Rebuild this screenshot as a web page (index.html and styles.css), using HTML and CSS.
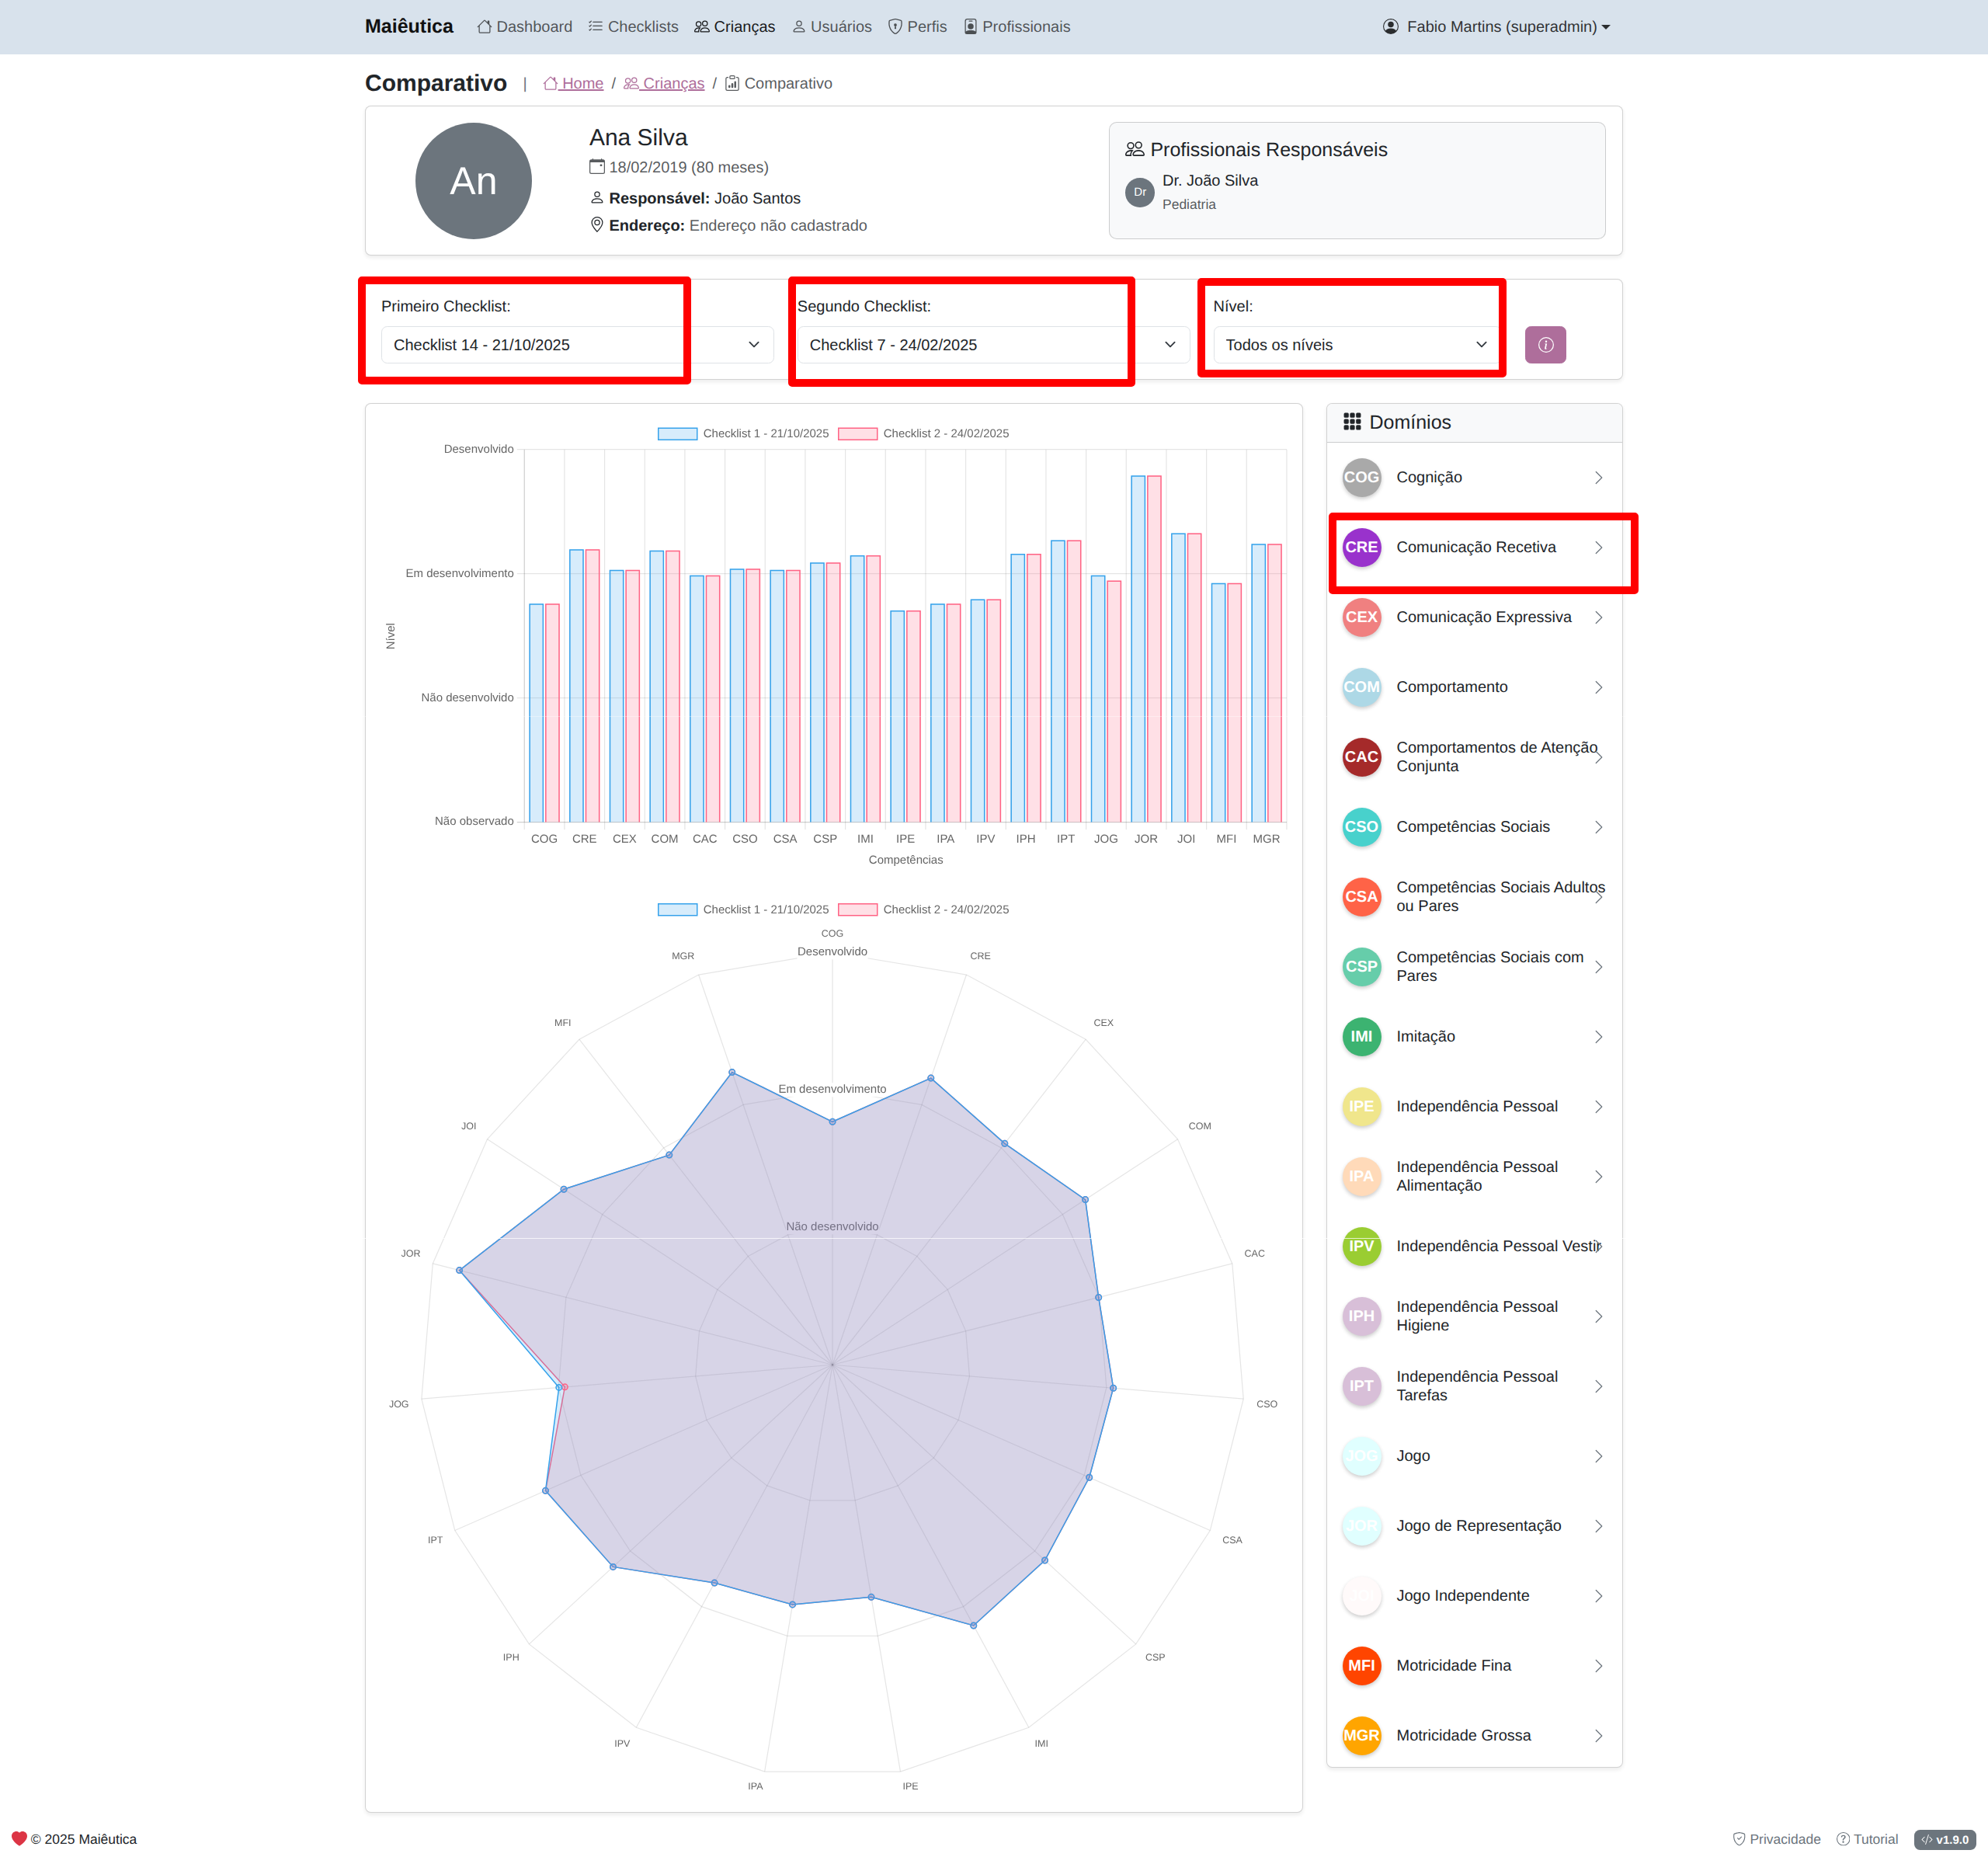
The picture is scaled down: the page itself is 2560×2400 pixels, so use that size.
FILE: index.html
```html
<!DOCTYPE html>
<html lang="pt-BR">
<head>
<meta charset="utf-8">
<title>Comparativo - Maiêutica</title>
<link rel="stylesheet" href="styles.css">
</head>
<body>
<svg class="sprite" xmlns="http://www.w3.org/2000/svg">
  <symbol id="i-house" viewBox="0 0 16 16"><path d="M8.707 1.5a1 1 0 0 0-1.414 0L.646 8.146a.5.5 0 0 0 .708.708L2 8.207V13.5A1.5 1.5 0 0 0 3.5 15h9a1.5 1.5 0 0 0 1.5-1.5V8.207l.646.647a.5.5 0 0 0 .708-.708L13 5.793V2.5a.5.5 0 0 0-.5-.5h-1a.5.5 0 0 0-.5.5v1.293zM13 7.207V13.5a.5.5 0 0 1-.5.5h-9a.5.5 0 0 1-.5-.5V7.207l5-5z"/></symbol>
  <symbol id="i-list" viewBox="0 0 16 16"><path fill-rule="evenodd" d="M5 11.5a.5.5 0 0 1 .5-.5h9a.5.5 0 0 1 0 1h-9a.5.5 0 0 1-.5-.5m0-4a.5.5 0 0 1 .5-.5h9a.5.5 0 0 1 0 1h-9a.5.5 0 0 1-.5-.5m0-4a.5.5 0 0 1 .5-.5h9a.5.5 0 0 1 0 1h-9a.5.5 0 0 1-.5-.5M3.854 2.146a.5.5 0 0 1 0 .708l-1.5 1.5a.5.5 0 0 1-.708 0l-.5-.5a.5.5 0 1 1 .708-.708L2 3.293l1.146-1.147a.5.5 0 0 1 .708 0m0 4a.5.5 0 0 1 0 .708l-1.5 1.5a.5.5 0 0 1-.708 0l-.5-.5a.5.5 0 1 1 .708-.708L2 7.293l1.146-1.147a.5.5 0 0 1 .708 0m0 4a.5.5 0 0 1 0 .708l-1.5 1.5a.5.5 0 0 1-.708 0l-.5-.5a.5.5 0 0 1 .708-.708l.146.147 1.146-1.147a.5.5 0 0 1 .708 0"/></symbol>
  <symbol id="i-people" viewBox="0 0 16 16"><path d="M15 14s1 0 1-1-1-4-5-4-5 3-5 4 1 1 1 1zm-7.978-1L7 12.996c.001-.264.167-1.03.76-1.72C8.312 10.629 9.282 10 11 10c1.717 0 2.687.63 3.24 1.276.593.69.758 1.457.76 1.72l-.008.002-.014.002zM11 7a2 2 0 1 0 0-4 2 2 0 0 0 0 4m3-2a3 3 0 1 1-6 0 3 3 0 0 1 6 0M6.936 9.28a6 6 0 0 0-1.23-.247A7 7 0 0 0 5 9c-4 0-5 3-5 4q0 1 1 1h4.216A2.24 2.24 0 0 1 5 13c0-1.01.377-2.042 1.09-2.904.243-.294.526-.569.846-.816M4.92 10A5.5 5.5 0 0 0 4 13H1c0-.26.164-1.03.76-1.724.545-.636 1.492-1.256 3.16-1.275ZM1.5 5.5a3 3 0 1 1 6 0 3 3 0 0 1-6 0m3-2a2 2 0 1 0 0 4 2 2 0 0 0 0-4"/></symbol>
  <symbol id="i-person" viewBox="0 0 16 16"><path d="M8 8a3 3 0 1 0 0-6 3 3 0 0 0 0 6m2-3a2 2 0 1 1-4 0 2 2 0 0 1 4 0m4 8c0 1-1 1-1 1H3s-1 0-1-1 1-4 6-4 6 3 6 4m-1-.004c-.001-.246-.154-.986-.832-1.664C11.516 10.68 10.289 10 8 10s-3.516.68-4.168 1.332c-.678.678-.83 1.418-.832 1.664z"/></symbol>
  <symbol id="i-shield-lock" viewBox="0 0 16 16"><path d="M5.338 1.59a61 61 0 0 0-2.837.856.48.48 0 0 0-.328.39c-.554 4.157.726 7.19 2.253 9.188a10.7 10.7 0 0 0 2.287 2.233c.346.244.652.42.893.533q.18.085.293.118a1 1 0 0 0 .101.025 1 1 0 0 0 .1-.025q.114-.034.294-.118c.24-.113.547-.29.893-.533a10.7 10.7 0 0 0 2.287-2.233c1.527-1.997 2.807-5.031 2.253-9.188a.48.48 0 0 0-.328-.39c-.651-.213-1.75-.56-2.837-.855C9.552 1.29 8.531 1.067 8 1.067c-.53 0-1.552.223-2.662.524zM5.072.56C6.157.265 7.31 0 8 0s1.843.265 2.928.56c1.11.3 2.229.655 2.887.87a1.54 1.54 0 0 1 1.044 1.262c.596 4.477-.787 7.795-2.465 9.99a11.8 11.8 0 0 1-2.517 2.453 7 7 0 0 1-1.048.625c-.28.132-.581.24-.829.24s-.548-.108-.829-.24a7 7 0 0 1-1.048-.625 11.8 11.8 0 0 1-2.517-2.453C1.928 10.487.545 7.169 1.141 2.692A1.54 1.54 0 0 1 2.185 1.43 63 63 0 0 1 5.072.56"/><path d="M9.5 6.5a1.5 1.5 0 0 1-1 1.415l.385 1.99a.5.5 0 0 1-.491.595h-.788a.5.5 0 0 1-.49-.595l.384-1.99a1.5 1.5 0 1 1 2-1.415"/></symbol>
  <symbol id="i-shield-check" viewBox="0 0 16 16"><path d="M5.338 1.59a61 61 0 0 0-2.837.856.48.48 0 0 0-.328.39c-.554 4.157.726 7.19 2.253 9.188a10.7 10.7 0 0 0 2.287 2.233c.346.244.652.42.893.533q.18.085.293.118a1 1 0 0 0 .101.025 1 1 0 0 0 .1-.025q.114-.034.294-.118c.24-.113.547-.29.893-.533a10.7 10.7 0 0 0 2.287-2.233c1.527-1.997 2.807-5.031 2.253-9.188a.48.48 0 0 0-.328-.39c-.651-.213-1.75-.56-2.837-.855C9.552 1.29 8.531 1.067 8 1.067c-.53 0-1.552.223-2.662.524zM5.072.56C6.157.265 7.31 0 8 0s1.843.265 2.928.56c1.11.3 2.229.655 2.887.87a1.54 1.54 0 0 1 1.044 1.262c.596 4.477-.787 7.795-2.465 9.99a11.8 11.8 0 0 1-2.517 2.453 7 7 0 0 1-1.048.625c-.28.132-.581.24-.829.24s-.548-.108-.829-.24a7 7 0 0 1-1.048-.625 11.8 11.8 0 0 1-2.517-2.453C1.928 10.487.545 7.169 1.141 2.692A1.54 1.54 0 0 1 2.185 1.43 63 63 0 0 1 5.072.56"/><path d="M10.854 5.146a.5.5 0 0 1 0 .708l-3 3a.5.5 0 0 1-.708 0l-1.5-1.5a.5.5 0 1 1 .708-.708L7.5 7.793l2.646-2.647a.5.5 0 0 1 .708 0"/></symbol>
  <symbol id="i-badge" viewBox="0 0 16 16"><path d="M6.5 2a.5.5 0 0 0 0 1h3a.5.5 0 0 0 0-1zM11 8a3 3 0 1 1-6 0 3 3 0 0 1 6 0"/><path d="M4.5 0A2.5 2.5 0 0 0 2 2.5V14a2 2 0 0 0 2 2h8a2 2 0 0 0 2-2V2.5A2.5 2.5 0 0 0 11.5 0zM3 2.5A1.5 1.5 0 0 1 4.5 1h7A1.5 1.5 0 0 1 13 2.5v10.795a4.2 4.2 0 0 0-.776-.492C11.392 12.387 10.063 12 8 12s-3.392.387-4.224.803a4.2 4.2 0 0 0-.776.492z"/></symbol>
  <symbol id="i-person-circle" viewBox="0 0 16 16"><path d="M11 6a3 3 0 1 1-6 0 3 3 0 0 1 6 0"/><path fill-rule="evenodd" d="M0 8a8 8 0 1 1 16 0A8 8 0 0 1 0 8m8-7a7 7 0 0 0-5.468 11.37C3.242 11.226 4.805 10 8 10s4.757 1.225 5.468 2.37A7 7 0 0 0 8 1"/></symbol>
  <symbol id="i-clipboard" viewBox="0 0 16 16"><path d="M4 11a1 1 0 1 1 2 0v1a1 1 0 1 1-2 0zm6-4a1 1 0 1 1 2 0v5a1 1 0 1 1-2 0zM7 9a1 1 0 0 1 2 0v3a1 1 0 1 1-2 0z"/><path d="M4 1.5H3a2 2 0 0 0-2 2V14a2 2 0 0 0 2 2h10a2 2 0 0 0 2-2V3.5a2 2 0 0 0-2-2h-1v1h1a1 1 0 0 1 1 1V14a1 1 0 0 1-1 1H3a1 1 0 0 1-1-1V3.5a1 1 0 0 1 1-1h1z"/><path d="M9.5 1a.5.5 0 0 1 .5.5v1a.5.5 0 0 1-.5.5h-3a.5.5 0 0 1-.5-.5v-1a.5.5 0 0 1 .5-.5zm-3-1A1.5 1.5 0 0 0 5 1.5v1A1.5 1.5 0 0 0 6.5 4h3A1.5 1.5 0 0 0 11 2.5v-1A1.5 1.5 0 0 0 9.5 0z"/></symbol>
  <symbol id="i-calendar" viewBox="0 0 16 16"><path d="M11 6.5a.5.5 0 0 1 .5-.5h1a.5.5 0 0 1 .5.5v1a.5.5 0 0 1-.5.5h-1a.5.5 0 0 1-.5-.5z"/><path d="M3.5 0a.5.5 0 0 1 .5.5V1h8V.5a.5.5 0 0 1 1 0V1h1a2 2 0 0 1 2 2v11a2 2 0 0 1-2 2H2a2 2 0 0 1-2-2V3a2 2 0 0 1 2-2h1V.5a.5.5 0 0 1 .5-.5M1 4v10a1 1 0 0 0 1 1h12a1 1 0 0 0 1-1V4z"/></symbol>
  <symbol id="i-geo" viewBox="0 0 16 16"><path d="M12.166 8.94c-.524 1.062-1.234 2.12-1.96 3.07A32 32 0 0 1 8 14.58a32 32 0 0 1-2.206-2.57c-.726-.95-1.436-2.008-1.96-3.07C3.304 7.867 3 6.862 3 6a5 5 0 0 1 10 0c0 .862-.305 1.867-.834 2.94M8 16s6-5.686 6-10A6 6 0 0 0 2 6c0 4.314 6 10 6 10"/><path d="M8 8a2 2 0 1 1 0-4 2 2 0 0 1 0 4m0 1a3 3 0 1 0 0-6 3 3 0 0 0 0 6"/></symbol>
  <symbol id="i-info" viewBox="0 0 16 16"><path d="M8 15A7 7 0 1 1 8 1a7 7 0 0 1 0 14m0 1A8 8 0 1 0 8 0a8 8 0 0 0 0 16"/><path d="m8.93 6.588-2.29.287-.082.38.45.083c.294.07.352.176.288.469l-.738 3.468c-.194.897.105 1.319.808 1.319.545 0 1.178-.252 1.465-.598l.088-.416c-.2.176-.492.246-.686.246-.275 0-.375-.193-.304-.533zM9 4.5a1 1 0 1 1-2 0 1 1 0 0 1 2 0"/></symbol>
  <symbol id="i-grid" viewBox="0 0 16 16"><path d="M1 2a1 1 0 0 1 1-1h2a1 1 0 0 1 1 1v2a1 1 0 0 1-1 1H2a1 1 0 0 1-1-1zm5 0a1 1 0 0 1 1-1h2a1 1 0 0 1 1 1v2a1 1 0 0 1-1 1H7a1 1 0 0 1-1-1zm5 0a1 1 0 0 1 1-1h2a1 1 0 0 1 1 1v2a1 1 0 0 1-1 1h-2a1 1 0 0 1-1-1zM1 7a1 1 0 0 1 1-1h2a1 1 0 0 1 1 1v2a1 1 0 0 1-1 1H2a1 1 0 0 1-1-1zm5 0a1 1 0 0 1 1-1h2a1 1 0 0 1 1 1v2a1 1 0 0 1-1 1H7a1 1 0 0 1-1-1zm5 0a1 1 0 0 1 1-1h2a1 1 0 0 1 1 1v2a1 1 0 0 1-1 1h-2a1 1 0 0 1-1-1zM1 12a1 1 0 0 1 1-1h2a1 1 0 0 1 1 1v2a1 1 0 0 1-1 1H2a1 1 0 0 1-1-1zm5 0a1 1 0 0 1 1-1h2a1 1 0 0 1 1 1v2a1 1 0 0 1-1 1H7a1 1 0 0 1-1-1zm5 0a1 1 0 0 1 1-1h2a1 1 0 0 1 1 1v2a1 1 0 0 1-1 1h-2a1 1 0 0 1-1-1z"/></symbol>
  <symbol id="i-chevron" viewBox="0 0 16 16"><path fill-rule="evenodd" d="M4.646 1.646a.5.5 0 0 1 .708 0l6 6a.5.5 0 0 1 0 .708l-6 6a.5.5 0 0 1-.708-.708L10.293 8 4.646 2.354a.5.5 0 0 1 0-.708"/></symbol>
  <symbol id="i-heart" viewBox="0 0 16 16"><path fill-rule="evenodd" d="M8 1.314C12.438-3.248 23.534 4.735 8 15-7.534 4.736 3.562-3.248 8 1.314"/></symbol>
  <symbol id="i-question" viewBox="0 0 16 16"><path d="M8 15A7 7 0 1 1 8 1a7 7 0 0 1 0 14m0 1A8 8 0 1 0 8 0a8 8 0 0 0 0 16"/><path d="M5.255 5.786a.237.237 0 0 0 .241.247h.825c.138 0 .248-.113.266-.25.09-.656.54-1.134 1.342-1.134.686 0 1.314.343 1.314 1.168 0 .635-.374.927-.965 1.371-.673.489-1.206 1.06-1.168 1.987l.003.217a.25.25 0 0 0 .25.246h.811a.25.25 0 0 0 .25-.25v-.105c0-.718.273-.927 1.01-1.486.609-.463 1.244-.977 1.244-2.056 0-1.511-1.276-2.241-2.673-2.241-1.267 0-2.655.59-2.75 2.286m1.557 5.763c0 .533.425.927 1.01.927.609 0 1.028-.394 1.028-.927 0-.552-.42-.94-1.029-.94-.584 0-1.009.388-1.009.94"/></symbol>
  <symbol id="i-code" viewBox="0 0 16 16"><path d="M10.478 1.647a.5.5 0 1 0-.956-.294l-4 13a.5.5 0 0 0 .956.294zM4.854 4.146a.5.5 0 0 1 0 .708L1.707 8l3.147 3.146a.5.5 0 0 1-.708.708l-3.5-3.5a.5.5 0 0 1 0-.708l3.5-3.5a.5.5 0 0 1 .708 0m6.292 0a.5.5 0 0 0 0 .708L14.293 8l-3.147 3.146a.5.5 0 0 0 .708.708l3.5-3.5a.5.5 0 0 0 0-.708l-3.5-3.5a.5.5 0 0 0-.708 0"/></symbol>
</svg>

<nav class="navbar">
  <div class="container nav-inner">
    <a class="brand" href="#">Maiêutica</a>
    <ul class="nav-links">
      <li><a href="#"><svg class="i"><use href="#i-house"/></svg> Dashboard</a></li>
      <li><a href="#"><svg class="i"><use href="#i-list"/></svg> Checklists</a></li>
      <li><a class="active" href="#"><svg class="i"><use href="#i-people"/></svg> Crianças</a></li>
      <li><a href="#"><svg class="i"><use href="#i-person"/></svg> Usuários</a></li>
      <li><a href="#"><svg class="i"><use href="#i-shield-lock"/></svg> Perfis</a></li>
      <li><a href="#"><svg class="i"><use href="#i-badge"/></svg> Profissionais</a></li>
    </ul>
    <a class="user" href="#"><svg class="i user-icon"><use href="#i-person-circle"/></svg> Fabio Martins (superadmin)</a>
  </div>
</nav>

<main class="container">
  <header class="page-head">
    <h1 class="page-title">Comparativo</h1>
    <span class="page-sep">|</span>
    <ol class="breadcrumb">
      <li><a href="#"><svg class="i"><use href="#i-house"/></svg> Home</a></li>
      <li><a href="#"><svg class="i"><use href="#i-people"/></svg> Crianças</a></li>
      <li class="current"><svg class="i"><use href="#i-clipboard"/></svg> Comparativo</li>
    </ol>
  </header>

  <section class="card child-card">
    <div class="child-avatar-col"><div class="child-avatar">An</div></div>
    <div class="child-info">
      <h2 class="child-name">Ana Silva</h2>
      <p class="info-date muted"><svg class="i"><use href="#i-calendar"/></svg> 18/02/2019 (80 meses)</p>
      <p class="info-resp"><svg class="i"><use href="#i-person"/></svg> <strong>Responsável:</strong> João Santos</p>
      <p><svg class="i"><use href="#i-geo"/></svg> <strong>Endereço:</strong> <span class="muted">Endereço não cadastrado</span></p>
    </div>
    <div class="pros">
      <h3 class="pros-title"><svg class="i"><use href="#i-people"/></svg> Profissionais Responsáveis</h3>
      <div class="pro">
        <div class="pro-avatar">Dr</div>
        <div>
          <div>Dr. João Silva</div>
          <div><small class="muted">Pediatria</small></div>
        </div>
      </div>
    </div>
  </section>

  <section class="card filters">
    <div class="field">
      <label for="f1">Primeiro Checklist:</label>
      <select id="f1"><option>Checklist 14 - 21/10/2025</option></select>
    </div>
    <div class="field">
      <label for="f2">Segundo Checklist:</label>
      <select id="f2"><option>Checklist 7 - 24/02/2025</option></select>
    </div>
    <div class="field">
      <label for="f3">Nível:</label>
      <select id="f3"><option>Todos os níveis</option></select>
    </div>
    <div class="field-btn"><button class="btn-info" type="button" aria-label="Informações"><svg class="i"><use href="#i-info"/></svg></button></div>
  </section>

  <div class="content-grid">
    <section class="card chart-card">
      <svg id="bar-chart" class="chart chart-bar" viewBox="471.25 520.75 1205 610" xmlns="http://www.w3.org/2000/svg"></svg>
      <svg id="radar-chart" class="chart chart-radar" viewBox="471.25 1130.75 1205 1203" xmlns="http://www.w3.org/2000/svg"></svg>
    </section>

    <aside class="card domains">
      <h3 class="domains-head"><svg class="i"><use href="#i-grid"/></svg> Domínios</h3>
      <ul class="domain-list">
        <li class="domain"><span class="badge c-cog">COG</span><span class="domain-name">Cognição</span><svg class="i chev"><use href="#i-chevron"/></svg></li>
        <li class="domain"><span class="badge c-cre">CRE</span><span class="domain-name">Comunicação Recetiva</span><svg class="i chev"><use href="#i-chevron"/></svg></li>
        <li class="domain"><span class="badge c-cex">CEX</span><span class="domain-name">Comunicação Expressiva</span><svg class="i chev"><use href="#i-chevron"/></svg></li>
        <li class="domain"><span class="badge c-com">COM</span><span class="domain-name">Comportamento</span><svg class="i chev"><use href="#i-chevron"/></svg></li>
        <li class="domain"><span class="badge c-cac">CAC</span><span class="domain-name">Comportamentos de Atenção Conjunta</span><svg class="i chev"><use href="#i-chevron"/></svg></li>
        <li class="domain"><span class="badge c-cso">CSO</span><span class="domain-name">Competências Sociais</span><svg class="i chev"><use href="#i-chevron"/></svg></li>
        <li class="domain"><span class="badge c-csa">CSA</span><span class="domain-name">Competências Sociais Adultos ou Pares</span><svg class="i chev"><use href="#i-chevron"/></svg></li>
        <li class="domain"><span class="badge c-csp">CSP</span><span class="domain-name">Competências Sociais com Pares</span><svg class="i chev"><use href="#i-chevron"/></svg></li>
        <li class="domain"><span class="badge c-imi">IMI</span><span class="domain-name">Imitação</span><svg class="i chev"><use href="#i-chevron"/></svg></li>
        <li class="domain"><span class="badge c-ipe">IPE</span><span class="domain-name">Independência Pessoal</span><svg class="i chev"><use href="#i-chevron"/></svg></li>
        <li class="domain"><span class="badge c-ipa">IPA</span><span class="domain-name">Independência Pessoal Alimentação</span><svg class="i chev"><use href="#i-chevron"/></svg></li>
        <li class="domain"><span class="badge c-ipv">IPV</span><span class="domain-name">Independência Pessoal Vestir</span><svg class="i chev"><use href="#i-chevron"/></svg></li>
        <li class="domain"><span class="badge c-iph">IPH</span><span class="domain-name">Independência Pessoal Higiene</span><svg class="i chev"><use href="#i-chevron"/></svg></li>
        <li class="domain"><span class="badge c-ipt">IPT</span><span class="domain-name">Independência Pessoal Tarefas</span><svg class="i chev"><use href="#i-chevron"/></svg></li>
        <li class="domain"><span class="badge c-jog">JOG</span><span class="domain-name">Jogo</span><svg class="i chev"><use href="#i-chevron"/></svg></li>
        <li class="domain"><span class="badge c-jor">JOR</span><span class="domain-name">Jogo de Representação</span><svg class="i chev"><use href="#i-chevron"/></svg></li>
        <li class="domain"><span class="badge c-joi">JOI</span><span class="domain-name">Jogo Independente</span><svg class="i chev"><use href="#i-chevron"/></svg></li>
        <li class="domain"><span class="badge c-mfi">MFI</span><span class="domain-name">Motricidade Fina</span><svg class="i chev"><use href="#i-chevron"/></svg></li>
        <li class="domain"><span class="badge c-mgr">MGR</span><span class="domain-name">Motricidade Grossa</span><svg class="i chev"><use href="#i-chevron"/></svg></li>
      </ul>
    </aside>
  </div>
</main>

<footer class="footer">
  <div class="foot-left"><svg class="i heart"><use href="#i-heart"/></svg> © 2025 Maiêutica</div>
  <div class="foot-right">
    <a href="#"><svg class="i"><use href="#i-shield-check"/></svg> Privacidade</a>
    <a href="#"><svg class="i"><use href="#i-question"/></svg> Tutorial</a>
    <span class="version"><svg class="i"><use href="#i-code"/></svg> v1.9.0</span>
  </div>
</footer>

<div class="seam seam-bar"></div>
<div class="seam seam-radar"></div>
<div class="mark mark-1"></div>
<div class="mark mark-2"></div>
<div class="mark mark-3"></div>
<div class="mark mark-4"></div>
<script src="charts.js"></script>
</body>
</html>
```
FILE: styles.css
```css
* { box-sizing: border-box; }
html, body { margin: 0; padding: 0; }
body {
  position: relative;
  min-height: 2400px;
  font-family: "Liberation Sans", Arial, sans-serif;
  font-size: 20px;
  line-height: 30px;
  color: #212529;
  background: #fff;
  text-rendering: geometricPrecision;
}
a { color: inherit; text-decoration: none; }
ul, ol { list-style: none; margin: 0; padding: 0; }
h1, h2, h3, p { margin: 0; font-weight: 400; }
.sprite { display: none; }
.i { width: 1em; height: 1em; fill: currentColor; vertical-align: -.125em; }
.muted { color: rgba(33, 37, 41, .75); }
.container { width: 1620px; margin: 0 auto; }

/* navbar */
.navbar { height: 70px; background: #d8e2ec; margin-bottom: 20px; display: flex; align-items: center; }
.nav-inner { display: flex; align-items: center; }
.brand { font-size: 25px; font-weight: 700; color: #111; margin-right: 20px; line-height: 37.5px; }
.nav-links { display: flex; flex: 1; }
.nav-links a { display: block; padding: 0 10px; color: rgba(0, 0, 0, .65); }
.nav-links a.active { color: rgba(0, 0, 0, .9); }
.user { color: rgba(0, 0, 0, .8); padding: 0 10px; margin-right: 6px; }
.user-icon { margin-right: 5.5px; }
.user::after {
  content: "";
  display: inline-block;
  margin-left: 5.1px;
  vertical-align: 3px;
  border-top: 6px solid;
  border-right: 6px solid transparent;
  border-left: 6px solid transparent;
}

/* heading */
.page-head { display: flex; align-items: center; margin-bottom: 10px; height: 36px; }
.page-title { font-size: 30px; line-height: 36px; font-weight: 700; }
.page-sep { margin: 0 20px; color: #6c757d; }
.breadcrumb { display: flex; }
.breadcrumb a { color: #ae6e9b; text-decoration: underline; }
.breadcrumb .current { color: rgba(33, 37, 41, .75); }
.breadcrumb li + li { padding-left: 10px; }
.breadcrumb li + li::before { content: "/"; padding-right: 10px; color: rgba(33, 37, 41, .75); display: inline-block; }

/* cards */
.card {
  background: #fff;
  border: 1.25px solid rgba(0, 0, 0, .175);
  border-radius: 7.5px;
  box-shadow: 0 2.5px 5px rgba(0, 0, 0, .075);
}
.child-card {
  display: grid;
  grid-template-columns: 267.9px 669.6px 655px;
  align-items: center;
  padding: 20px 20px 20px 5px;
  margin-bottom: 30px;
}
.child-avatar-col { display: flex; justify-content: center; }
.child-avatar {
  width: 150px; height: 150px;
  border-radius: 50%;
  background: #6c757d;
  color: #fff;
  font-size: 50px;
  display: flex; align-items: center; justify-content: center;
}
.child-info { padding-left: 15px; }
.child-name { font-size: 30px; line-height: 36px; margin-bottom: 5px; }
.info-date { margin-bottom: 10px; }
.info-resp { margin-bottom: 5px; }
.pros {
  height: 151px;
  margin-left: 15px;
  padding: 20px;
  background: #f8f9fa;
  border: 1.25px solid rgba(0, 0, 0, .175);
  border-radius: 10px;
}
.pros-title { font-size: 25px; line-height: 30px; margin-bottom: 10px; }
.pro { display: flex; align-items: center; }
.pro-avatar {
  width: 37.5px; height: 37.5px;
  margin-right: 10px;
  border-radius: 50%;
  background: #6c757d;
  color: #fff;
  font-size: 15px;
  display: flex; align-items: center; justify-content: center;
}
small { font-size: 17.5px; }

/* filters */
.filters {
  display: grid;
  grid-template-columns: 505.8px 505.8px 371.9px 104px;
  column-gap: 30px;
  padding: 20px;
  margin-bottom: 30px;
}
.field label { display: block; margin-bottom: 10px; }
.field select {
  display: block;
  width: 100%;
  height: 47.5px;
  padding: 7.5px 45px 7.5px 15px;
  font: inherit;
  line-height: 30px;
  color: #212529;
  background: #fff url("data:image/svg+xml,%3csvg xmlns='http://www.w3.org/2000/svg' viewBox='0 0 16 16'%3e%3cpath fill='none' stroke='%23343a40' stroke-linecap='round' stroke-linejoin='round' stroke-width='2' d='m2 5 6 6 6-6'/%3e%3c/svg%3e") no-repeat right 15px center / 20px 15px;
  border: 1.25px solid #dee2e6;
  border-radius: 7.5px;
  appearance: none;
}
.field-btn { display: flex; align-items: flex-end; }
.btn-info {
  width: 52.5px; height: 47.5px;
  padding: 0;
  border: 1.25px solid #ae6e9b;
  border-radius: 7.5px;
  background: #ae6e9b;
  color: #fff;
  font-size: 20px;
  display: flex; align-items: center; justify-content: center;
}

/* content */
.content-grid { display: grid; grid-template-columns: 1207.5px 382.5px; column-gap: 30px; align-items: start; }
.chart { display: block; width: 1205px; will-change: transform; }
.chart-bar { height: 610px; }
.chart-radar { height: 1203px; }
.chart text { font-family: "Liberation Sans", Arial, sans-serif; font-size: 15px; fill: #666; text-rendering: geometricPrecision; }
.chart text.tick-sm { font-size: 12.5px; }
.grid-line { stroke: rgba(0, 0, 0, .1); stroke-width: 1.25; fill: none; }
.backdrop { fill: #fff; }
.fill-a { fill: rgba(54, 162, 235, .2); stroke: none; }
.fill-b { fill: rgba(255, 99, 132, .2); stroke: none; }
.line-a { stroke: rgb(54, 162, 235); stroke-width: 1.5; fill: none; }
.line-b { stroke: rgb(255, 99, 132); stroke-width: 1.5; fill: none; }

/* domains */
.domains { overflow: hidden; }
.domains-head {
  font-size: 25px;
  line-height: 30px;
  padding: 9.5px 20px;
  background: #f8f9fa;
  border-bottom: 1.25px solid rgba(0, 0, 0, .175);
}
.domains-head .i { margin-right: 3px; }
.domain {
  position: relative;
  display: flex;
  align-items: center;
  height: 90px;
  padding: 0 20px;
  line-height: 24px;
}
.domain:last-child { margin-bottom: -5px; }
.badge {
  flex: none;
  width: 50px; height: 50px;
  margin-right: 20px;
  border-radius: 50%;
  color: #fff;
  font-weight: 700;
  box-shadow: 0 2.5px 5px rgba(0, 0, 0, .2);
  display: flex; align-items: center; justify-content: center;
  white-space: nowrap;
}
.domain-name { flex: 1; }
.chev { position: absolute; right: 20px; top: 35px; color: #6c757d; }
.c-cog { background: #a9a9a9; }
.c-cre { background: #9932cc; }
.c-cex { background: #f08080; }
.c-com { background: #add8e6; }
.c-cac { background: #a52a2a; }
.c-cso { background: #48d1cc; }
.c-csa { background: #ff6347; }
.c-csp { background: #66cdaa; }
.c-imi { background: #3cb371; }
.c-ipe { background: #f0e68c; }
.c-ipa { background: #ffdab9; }
.c-ipv { background: #9acd32; }
.c-iph { background: #d8bfd8; }
.c-ipt { background: #d8bfd8; }
.c-jog { background: #e0ffff; }
.c-jor { background: #e0ffff; }
.c-joi { background: #fffafa; }
.c-mfi { background: #ff4500; }
.c-mgr { background: #ffa500; }

/* footer */
.footer {
  display: flex;
  justify-content: space-between;
  align-items: center;
  margin-top: 22.25px;
  padding: 0 15px;
  font-size: 17.5px;
  line-height: 25.5px;
}
.heart { width: 20px; height: 20px; color: #dc3545; vertical-align: -4px; }
.foot-right { display: flex; align-items: center; gap: 20px; color: #6c757d; }
.version {
  padding: 5.25px 9.75px;
  font-size: 15px;
  font-weight: 700;
  line-height: 15px;
  color: #fff;
  background: #6c757d;
  border-radius: 7.5px;
}

/* screen-capture artefacts and review marks lying over the page */
.seam { position: absolute; left: 0; width: 100%; height: 1px; background: #fff; pointer-events: none; }
.seam-bar { top: 922px; opacity: .35; }
.seam-radar { top: 1594px; opacity: .75; }
.mark { position: absolute; border: 10px solid #f00; border-radius: 5px; pointer-events: none; }
.mark-1 { left: 461px; top: 356px; width: 429px; height: 139px; }
.mark-2 { left: 1015px; top: 356px; width: 447px; height: 142px; }
.mark-3 { left: 1542px; top: 358px; width: 398px; height: 128px; }
.mark-4 { left: 1711px; top: 660px; width: 399px; height: 105px; }
```
FILE: charts.js
```js
(function () {
  var LABELS = ['COG','CRE','CEX','COM','CAC','CSO','CSA','CSP','IMI','IPE','IPA','IPV','IPH','IPT','JOG','JOR','JOI','MFI','MGR'];
  var A = [1.758,2.195,2.03,2.187,1.987,2.04,2.03,2.09,2.147,1.703,1.758,1.794,2.16,2.27,1.987,2.79,2.325,1.924,2.24];
  var B = A.slice(); B[14] = 1.944;
  var LEVELS = ['Não observado','Não desenvolvido','Em desenvolvimento','Desenvolvido'];

  function text(x, y, s, anchor, cls, extra) {
    return '<text x="' + x + '" y="' + y + '" text-anchor="' + (anchor || 'middle') + '" dominant-baseline="central"' +
      (cls ? ' class="' + cls + '"' : '') + (extra || '') + '>' + s + '</text>';
  }
  function line(x1, y1, x2, y2) {
    return '<line class="grid-line" x1="' + x1 + '" y1="' + y1 + '" x2="' + x2 + '" y2="' + y2 + '"/>';
  }
  function legend(y) {
    return '<rect class="fill-a" x="848" y="' + (y - 7.5) + '" width="50" height="15"/>' +
      '<rect class="line-a" x="848" y="' + (y - 7.5) + '" width="50" height="15"/>' +
      text(906, y, 'Checklist 1 - 21/10/2025', 'start') +
      '<rect class="fill-b" x="1080" y="' + (y - 7.5) + '" width="50" height="15"/>' +
      '<rect class="line-b" x="1080" y="' + (y - 7.5) + '" width="50" height="15"/>' +
      text(1138, y, 'Checklist 2 - 24/02/2025', 'start');
  }

  /* bar chart */
  (function () {
    var L = 675.5, R = 1657.2, T = 579.4, B0 = 1059.3, STEP = (B0 - T) / 3, CAT = (R - L) / 19;
    var s = legend(559.5), i, k;
    for (k = 0; k < 4; k++) {
      var y = B0 - k * STEP;
      s += line(666, y, R, y);
      s += text(662, y - (k === 0 ? 1 : 0), LEVELS[k], 'end');
    }
    for (i = 0; i <= 19; i++) s += line(L + i * CAT, T, L + i * CAT, 1069);
    s += line(L, T, L, B0) + line(666, B0, R, B0);
    function bar(x, w, v, n) {
      var top = B0 - v * STEP;
      return '<rect class="fill-' + n + '" x="' + x + '" y="' + top + '" width="' + w + '" height="' + (B0 - top) + '"/>' +
        '<path class="line-' + n + '" d="M' + (x + .7) + ' ' + B0 + 'V' + (top + .7) + 'H' + (x + w - .7) + 'V' + B0 + '"/>';
    }
    for (i = 0; i < 19; i++) {
      var c = L + (i + .5) * CAT, slot = CAT * .4, w = slot * .9;
      s += bar(c - slot + (slot - w) / 2, w, A[i], 'a');
      s += bar(c + (slot - w) / 2, w, B[i], 'b');
      s += text(c, 1081, LABELS[i]);
    }
    s += text(1167, 1108.5, 'Competências');
    s += text(503.5, 820, 'Nível', 'middle', '', ' transform="rotate(-90 503.5 820)"');
    document.getElementById('bar-chart').innerHTML = s;
  })();

  /* radar chart */
  (function () {
    var CX = 1072.3, CY = 1758, STEP = 177, N = 19;
    var POS = [[1072.3,1202.6],[1263,1231.5],[1421.5,1317.7],[1545.5,1450.5],[1616,1615],[1632,1809],[1587.3,1983.7],[1488,2134.7],[1341.5,2246],[1172.8,2301],[973.2,2301],[801.5,2246],[658.5,2134.7],[561,1983.7],[514,1809],[529.3,1615],[604,1450.5],[725,1317.7],[880,1231.5]];
    var RA = A.map(function (v) { return v + .01; });
    var RB = B.map(function (v) { return v + .01; });
    function pt(i, r) {
      var a = i * 2 * Math.PI / N;
      return [CX + r * Math.sin(a), CY - r * Math.cos(a)];
    }
    function poly(vals) {
      return vals.map(function (v, i) { return pt(i, v * STEP).map(function (n) { return n.toFixed(2); }).join(','); }).join(' ');
    }
    var s = legend(1172), i, k;
    for (k = 1; k <= 3; k++) {
      var ring = [];
      for (i = 0; i < N; i++) ring.push(k);
      s += '<polygon class="grid-line" points="' + poly(ring) + '"/>';
    }
    for (i = 0; i < N; i++) {
      var o = pt(i, 3 * STEP);
      s += line(CX, CY, o[0].toFixed(2), o[1].toFixed(2));
      s += text(POS[i][0], POS[i][1], LABELS[i], 'middle', 'tick-sm');
    }
    var W = [0, 120, 142, 91];
    for (k = 1; k <= 3; k++) {
      var ly = CY - k * STEP;
      s += '<rect class="backdrop" x="' + (CX - W[k] / 2) + '" y="' + (ly - 9) + '" width="' + W[k] + '" height="18"/>';
      s += text(CX, ly - 1, LEVELS[k]);
    }
    s += '<polygon class="fill-b" points="' + poly(RB) + '"/><polygon class="line-b" points="' + poly(RB) + '"/>';
    s += '<polygon class="fill-a" points="' + poly(RA) + '"/><polygon class="line-a" points="' + poly(RA) + '"/>';
    function dots(vals, n) {
      return vals.map(function (v, i) {
        var p = pt(i, v * STEP);
        return '<circle class="fill-' + n + '" cx="' + p[0].toFixed(2) + '" cy="' + p[1].toFixed(2) + '" r="3.75"/>' +
          '<circle class="line-' + n + '" cx="' + p[0].toFixed(2) + '" cy="' + p[1].toFixed(2) + '" r="3.75"/>';
      }).join('');
    }
    s += dots(RB, 'b') + dots(RA, 'a');
    document.getElementById('radar-chart').innerHTML = s;
  })();
})();
```
